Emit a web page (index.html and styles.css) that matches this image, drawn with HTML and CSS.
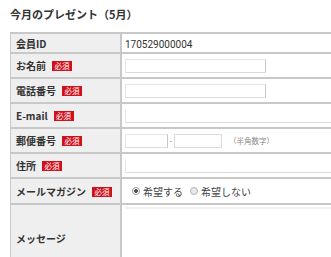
FILE: index.html
```html
<!DOCTYPE html>
<html lang="ja">
<head>
  <meta charset="UTF-8">
  <title>今月のプレゼント</title>
  <link rel="stylesheet" href="styles.css">
</head>
<body>
  <h1>今月のプレゼント（5月）</h1>

  <div class="form-wrap">
    <table class="form-table">
      <tr class="row-id">
        <th>会員ID</th>
        <td><span class="member-id">170529000004</span></td>
      </tr>
      <tr>
        <th>お名前<span class="req">必須</span></th>
        <td><input type="text" class="input-mid"></td>
      </tr>
      <tr>
        <th>電話番号<span class="req">必須</span></th>
        <td><input type="text" class="input-mid"></td>
      </tr>
      <tr>
        <th>E-mail<span class="req">必須</span></th>
        <td><input type="text" class="input-wide"></td>
      </tr>
      <tr>
        <th>郵便番号<span class="req">必須</span></th>
        <td>
          <div class="zip">
            <input type="text" class="input-zip">
            <span class="dash">-</span>
            <input type="text" class="input-zip2">
            <span class="note">（半角数字）</span>
          </div>
        </td>
      </tr>
      <tr>
        <th>住所<span class="req">必須</span></th>
        <td><input type="text" class="input-wide"></td>
      </tr>
      <tr class="row-mail">
        <th>メールマガジン<span class="req">必須</span></th>
        <td>
          <div class="radios">
            <label class="radio"><span class="dot checked"></span>希望する</label>
            <label class="radio"><span class="dot"></span>希望しない</label>
          </div>
        </td>
      </tr>
      <tr class="row-msg">
        <th>メッセージ</th>
        <td><textarea class="message"></textarea></td>
      </tr>
    </table>
  </div>
</body>
</html>
```

FILE: styles.css
```css
html, body {
  margin: 0;
  padding: 0;
  background: #fff;
}

body {
  font-family: "Noto Sans CJK JP", "Noto Sans", sans-serif;
  color: #333;
  overflow: hidden;
}

h1 {
  font-size: 11px;
  line-height: 16px;
  font-weight: bold;
  margin: 0;
  padding: 6px 10px 0;
  color: #333;
}

.form-wrap {
  margin-top: 10px;
  padding-left: 10px;
}

.form-table {
  border-collapse: collapse;
  width: 100%;
  font-size: 10px;
}

.form-table th,
.form-table td {
  border: 2px solid #c8c8c8;
  height: 23px;
  padding: 0;
  vertical-align: middle;
}

.form-table th {
  width: 104px;
  background: #efefef;
  text-align: left;
  padding-left: 5px;
  font-weight: bold;
  white-space: nowrap;
}

.form-table td {
  padding-left: 3px;
  background: #fff;
  border-right: none;
}

.form-table th:first-child {
  border-left: 1px solid #c8c8c8;
}

.row-id th,
.row-id td {
  height: 18px;
}

.row-mail th,
.row-mail td {
  height: 24px;
}

.row-msg th,
.row-msg td {
  height: 66px;
}

.member-id {
  font-family: Roboto, "Noto Sans", sans-serif;
  color: #333;
}

.req {
  display: inline-block;
  background: #d0101b;
  color: #fff;
  font-size: 7.5px;
  line-height: 10px;
  padding: 0 2.5px;
  margin-left: 6px;
  vertical-align: 1px;
  font-weight: normal;
}

input,
textarea {
  box-sizing: border-box;
  border: 1px solid #e6e6e6;
  border-right-color: #c8c8c8;
  border-bottom-color: #dcdcdc;
  background: #fff;
  margin: 0;
  padding: 0;
  display: block;
  height: 14px;
  outline: none;
}

.input-mid {
  width: 141px;
}

.input-wide {
  width: 100%;
  border-top-color: #fff;
  border-right: none;
}

.zip {
  display: flex;
  align-items: center;
}

.input-zip {
  width: 43px;
}

.input-zip2 {
  width: 48px;
  border-color: #dadada;
}

.dash {
  width: 6px;
  text-align: center;
  color: #888;
  font-size: 8px;
}

.note {
  margin-left: 7px;
  font-size: 7.5px;
  color: #888;
}

.radios {
  display: flex;
  align-items: center;
  padding-left: 7px;
  gap: 7px;
}

.radio {
  display: flex;
  align-items: center;
  gap: 3px;
  color: #444;
}

.dot {
  width: 8px;
  height: 8px;
  border-radius: 50%;
  box-sizing: border-box;
  border: 1px solid #b5b5b5;
  background: #e8e8e8;
}

.dot.checked {
  background: radial-gradient(circle, #555 0 1.6px, #fff 2.2px);
  border-color: #999;
}

.message {
  width: 100%;
  height: 62px;
  resize: none;
  border-top: 2px solid #f0f0f0;
  border-right: none;
  border-left-color: #fff;
  border-bottom-color: #fff;
}
```
